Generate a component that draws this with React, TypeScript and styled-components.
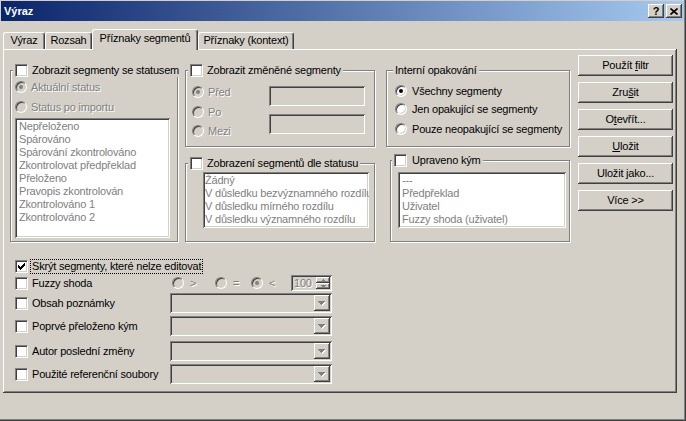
import React from "react";
import styled, { createGlobalStyle, css } from "styled-components";

const FACE = "#D4D0C8";
const SHADOW = "#808080";
const DARK = "#404040";
const LIGHT = "#FFFFFF";

const GlobalStyle = createGlobalStyle`
	html, body {
		margin: 0;
		padding: 0;
		background: ${FACE};
	}
	body {
		font-family: "Liberation Sans", Arial, sans-serif;
		font-size: 11px;
		letter-spacing: -0.2px;
		color: #000;
	}
	* {
		box-sizing: border-box;
	}
`;

const raised = css`
	box-shadow: inset -1px -1px ${DARK}, inset 1px 1px ${LIGHT}, inset -2px -2px ${SHADOW},
		inset 2px 2px ${FACE};
`;

const sunken = css`
	box-shadow: inset 1px 1px ${SHADOW}, inset -1px -1px ${LIGHT}, inset 2px 2px ${DARK},
		inset -2px -2px ${FACE};
`;

const Window = styled("div")`
	width: 686px;
	height: 421px;
	background: ${FACE};
	padding: 1px 2px 2px 1px;
	box-shadow: inset -1px -1px ${DARK}, inset -2px -2px ${SHADOW};
	display: flex;
	flex-direction: column;
`;

const TitleBar = styled("div")`
	height: 20px;
	display: flex;
	align-items: center;
	padding: 0 2px 0 3px;
	background: linear-gradient(to right, #0a246a, #a6caf0);
`;

const TitleText = styled("span")`
	flex: 1;
	color: #fff;
	font-weight: bold;
	letter-spacing: 0;
`;

const TitleButton = styled("span")`
	${raised};
	width: 16px;
	height: 14px;
	margin-left: 2px;
	background: ${FACE};
	display: flex;
	align-items: center;
	justify-content: center;
	font-weight: bold;
	font-size: 11px;
	line-height: 14px;
	letter-spacing: 0;
`;

const TabStrip = styled("div")`
	height: 28px;
	display: flex;
	align-items: flex-end;
	padding-left: 2px;
`;

const Tab = styled("div")<{ $w: number; $active?: boolean }>`
	position: relative;
	z-index: 1;
	width: ${({ $w }) => $w}px;
	height: ${({ $active }) => ($active ? 21 : 17)}px;
	margin-bottom: ${({ $active }) => ($active ? -1 : 0)}px;
	padding-top: ${({ $active }) => ($active ? 2 : 1)}px;
	background: ${FACE};
	border-top: 1px solid ${LIGHT};
	border-left: 1px solid ${LIGHT};
	border-right: 1px solid ${DARK};
	border-radius: 3px 3px 0 0;
	box-shadow: inset -1px 0 ${SHADOW};
	display: flex;
	justify-content: center;
	line-height: 13px;
	white-space: nowrap;
`;

const Panel = styled("div")`
	${raised};
	margin-left: 2px;
	width: 674px;
	height: 344px;
	padding: 0 4px 0 7px;
	display: flex;
	align-items: flex-start;
`;

const Main = styled("div")`
	width: 560px;
	padding-top: 21px;
	display: flex;
	flex-direction: column;
`;

const TopGrid = styled("div")`
	height: 172px;
	display: flex;
`;

const Column = styled("div")<{ $w: number; $ml?: number }>`
	width: ${({ $w }) => $w}px;
	margin-left: ${({ $ml }) => $ml ?? 0}px;
	display: flex;
	flex-direction: column;
`;

const Group = styled("div")<{ $h?: number; $mt?: number; $ml?: number }>`
	position: relative;
	border: 1px solid ${SHADOW};
	box-shadow: inset 1px 1px ${LIGHT}, 1px 1px 0 ${LIGHT};
	margin-top: ${({ $mt }) => $mt ?? 0}px;
	margin-left: ${({ $ml }) => $ml ?? 0}px;
	${({ $h }) => ($h ? `height: ${$h}px;` : "flex: 1;")}
`;

const Legend = styled("div")<{ $left: number }>`
	position: absolute;
	top: -7px;
	left: ${({ $left }) => $left}px;
	height: 13px;
	padding: 0 2px;
	background: ${FACE};
	display: flex;
	align-items: center;
	line-height: 13px;
	white-space: nowrap;
`;

const GroupBody = styled("div")<{ $pad: string }>`
	padding: ${({ $pad }) => $pad};
	display: flex;
	flex-direction: column;
`;

const SplitBody = styled("div")`
	padding: 11px 9px 0 6px;
	display: flex;
	justify-content: space-between;
`;

const Stack = styled("div")<{ $pt?: number; $gap?: number }>`
	padding-top: ${({ $pt }) => $pt ?? 0}px;
	display: flex;
	flex-direction: column;
	gap: ${({ $gap }) => $gap ?? 0}px;
`;

const OptionRow = styled("div")<{ $h: number }>`
	height: ${({ $h }) => $h}px;
	display: flex;
	align-items: center;
	white-space: nowrap;
`;

const Text = styled("span")<{ $disabled?: boolean; $ml?: number }>`
	margin-left: ${({ $ml }) => $ml ?? 0}px;
	line-height: 13px;
	white-space: nowrap;
	color: ${({ $disabled }) => ($disabled ? SHADOW : "#000")};
	text-shadow: ${({ $disabled }) => ($disabled ? `1px 1px 0 ${LIGHT}` : "none")};
`;

const FocusText = styled("span")`
	margin-left: 2px;
	padding: 0 1px;
	border: 1px dotted #000;
	line-height: 13px;
	white-space: nowrap;
`;

const Box = styled("span")<{ $disabled?: boolean }>`
	flex: none;
	width: 13px;
	height: 13px;
	background: ${({ $disabled }) => ($disabled ? FACE : LIGHT)};
	border-top: 1px solid ${SHADOW};
	border-left: 1px solid ${SHADOW};
	border-bottom: 1px solid ${LIGHT};
	border-right: 1px solid ${LIGHT};
	box-shadow: inset 1px 1px ${DARK}, inset -1px -1px ${FACE};
	display: flex;
	align-items: center;
	justify-content: center;
`;

const Round = styled("span")<{ $disabled?: boolean }>`
	flex: none;
	width: 12px;
	height: 12px;
	border-radius: 50%;
	background: ${({ $disabled }) => ($disabled ? FACE : LIGHT)};
	border-top: 1px solid ${SHADOW};
	border-left: 1px solid ${SHADOW};
	border-bottom: 1px solid ${LIGHT};
	border-right: 1px solid ${LIGHT};
	box-shadow: inset 1px 1px ${DARK}, inset -1px -1px ${FACE};
	display: flex;
	align-items: center;
	justify-content: center;
`;

const Dot = styled("span")<{ $disabled?: boolean }>`
	width: 4px;
	height: 4px;
	border-radius: 50%;
	background: ${({ $disabled }) => ($disabled ? SHADOW : "#000")};
`;

const ListBox = styled("div")<{ $h: number; $pad: number }>`
	${sunken};
	height: ${({ $h }) => $h}px;
	padding: 2px ${({ $pad }) => 2 + $pad}px;
	background: ${LIGHT};
	overflow: hidden;
`;

const ListItem = styled("div")`
	line-height: 13px;
	white-space: nowrap;
	color: ${SHADOW};
`;

const EditBox = styled("div")`
	${sunken};
	width: 96px;
	height: 20px;
	background: ${FACE};
`;

const BottomRows = styled("div")`
	margin-top: 16px;
	padding-left: 5px;
	display: flex;
	flex-direction: column;
`;

const FieldRow = styled("div")<{ $h: number }>`
	height: ${({ $h }) => $h}px;
	display: grid;
	grid-template-columns: 155px 162px;
	align-items: center;
`;

const FieldLabel = styled("div")`
	display: flex;
	align-items: center;
`;

const Combo = styled("div")`
	${sunken};
	height: 20px;
	padding: 2px;
	background: ${FACE};
	display: flex;
	justify-content: flex-end;
`;

const DropButton = styled("span")`
	${raised};
	width: 16px;
	height: 16px;
	background: ${FACE};
	display: flex;
	align-items: center;
	justify-content: center;
`;

const FuzzyControls = styled("div")`
	padding-left: 2px;
	display: flex;
	align-items: center;
`;

const FuzzyOption = styled("div")<{ $w: number }>`
	width: ${({ $w }) => $w}px;
	display: flex;
	align-items: center;
`;

const SpinBox = styled("div")`
	${sunken};
	width: 41px;
	height: 16px;
	padding: 2px;
	background: ${FACE};
	display: flex;
	align-items: stretch;
`;

const SpinValue = styled("span")`
	flex: 1;
	padding-left: 1px;
	line-height: 12px;
	color: ${SHADOW};
	text-shadow: 1px 1px 0 ${LIGHT};
`;

const SpinButtons = styled("span")`
	width: 14px;
	display: flex;
	flex-direction: column;
`;

const SpinButton = styled("span")`
	${raised};
	flex: 1;
	background: ${FACE};
	display: flex;
	align-items: center;
	justify-content: center;
`;

const ButtonColumn = styled("div")`
	width: 95px;
	margin-left: auto;
	padding-top: 6px;
	display: flex;
	flex-direction: column;
	gap: 6px;
`;

const Button = styled("div")`
	${raised};
	height: 21px;
	background: ${FACE};
	display: flex;
	align-items: center;
	justify-content: center;
	line-height: 13px;
	white-space: nowrap;
`;

const CheckMark = () => (
	<svg width="7" height="7" viewBox="0 0 7 7" shapeRendering="crispEdges">
		<polygon points="0,2 2,4 7,-1 7,2 2,7 0,5" fill="#000" />
	</svg>
);

const Arrow = () => (
	<svg width="8" height="5" viewBox="0 0 8 5" shapeRendering="crispEdges">
		<polygon points="1,1 8,1 4.5,5" fill={LIGHT} />
		<polygon points="0,0 7,0 3.5,4" fill={SHADOW} />
	</svg>
);

const SpinArrow = ({ up }: { up?: boolean }) => (
	<svg width="5" height="3" viewBox="0 0 5 3" shapeRendering="crispEdges">
		<polygon points={up ? "2.5,0 5,3 0,3" : "0,0 5,0 2.5,3"} fill={SHADOW} />
	</svg>
);

const CloseGlyph = () => (
	<svg width="8" height="7" viewBox="0 0 8 7">
		<path d="M0.5 0.5 L7.5 6.5 M7.5 0.5 L0.5 6.5" stroke="#000" strokeWidth="1.6" />
	</svg>
);

interface ICheckProps {
	checked?: boolean;
	disabled?: boolean;
}

const Checkbox = ({ checked, disabled }: ICheckProps) => (
	<Box $disabled={disabled}>{checked && <CheckMark />}</Box>
);

const Radio = ({ checked, disabled }: ICheckProps) => (
	<Round $disabled={disabled}>{checked && <Dot $disabled={disabled} />}</Round>
);

const statusItems = [
	"Nepřeloženo",
	"Spárováno",
	"Spárování zkontrolováno",
	"Zkontrolovat předpřeklad",
	"Přeloženo",
	"Pravopis zkontrolován",
	"Zkontrolováno 1",
	"Zkontrolováno 2",
];

const diffItems = [
	"Žádný",
	"V důsledku bezvýznamného rozdílu",
	"V důsledku mírného rozdílu",
	"V důsledku významného rozdílu",
];

const editorItems = ["---", "Předpřeklad", "Uživatel", "Fuzzy shoda (uživatel)"];

const comboRows = [
	{ label: "Obsah poznámky", h: 22 },
	{ label: "Poprvé přeloženo kým", h: 24 },
	{ label: "Autor poslední změny", h: 26 },
	{ label: "Použité referenční soubory", h: 20 },
];

export default function App() {
	return (
		<>
			<GlobalStyle />
			<Window>
				<TitleBar>
					<TitleText>Výraz</TitleText>
					<TitleButton>?</TitleButton>
					<TitleButton>
						<CloseGlyph />
					</TitleButton>
				</TitleBar>

				<TabStrip>
					<Tab $w={42}>Výraz</Tab>
					<Tab $w={47}>Rozsah</Tab>
					<Tab $w={106} $active>
						Příznaky segmentů
					</Tab>
					<Tab $w={96}>Příznaky (kontext)</Tab>
				</TabStrip>

				<Panel>
					<Main>
						<TopGrid>
							<Column $w={168}>
								<Group>
									<Legend $left={2}>
										<Checkbox />
										<Text $ml={4}>Zobrazit segmenty se statusem</Text>
									</Legend>
									<GroupBody $pad="6px 7px 0 4px">
										<OptionRow $h={20}>
											<Radio checked disabled />
											<Text $disabled $ml={4}>
												Aktuální status
											</Text>
										</OptionRow>
										<OptionRow $h={20}>
											<Radio disabled />
											<Text $disabled $ml={4}>
												Status po importu
											</Text>
										</OptionRow>
										<ListBox $h={120} $pad={2} style={{ marginTop: 1 }}>
											{statusItems.map((item) => (
												<ListItem key={item}>{item}</ListItem>
											))}
										</ListBox>
									</GroupBody>
								</Group>
							</Column>

							<Column $w={190} $ml={7}>
								<Group $h={77}>
									<Legend $left={2}>
										<Checkbox />
										<Text $ml={4}>Zobrazit změněné segmenty</Text>
									</Legend>
									<SplitBody>
										<Stack>
											<OptionRow $h={20}>
												<Radio checked disabled />
												<Text $disabled $ml={4}>
													Před
												</Text>
											</OptionRow>
											<OptionRow $h={20}>
												<Radio disabled />
												<Text $disabled $ml={4}>
													Po
												</Text>
											</OptionRow>
											<OptionRow $h={18}>
												<Radio disabled />
												<Text $disabled $ml={4}>
													Mezi
												</Text>
											</OptionRow>
										</Stack>
										<Stack $pt={4} $gap={8}>
											<EditBox />
											<EditBox />
										</Stack>
									</SplitBody>
								</Group>
								<Group $mt={16}>
									<Legend $left={2}>
										<Checkbox />
										<Text $ml={4}>Zobrazení segmentů dle statusu</Text>
									</Legend>
									<GroupBody $pad="8px 5px 0 17px">
										<ListBox $h={56} $pad={0}>
											{diffItems.map((item) => (
												<ListItem key={item}>{item}</ListItem>
											))}
										</ListBox>
									</GroupBody>
								</Group>
							</Column>

							<Column $w={184} $ml={11}>
								<Group $h={77}>
									<Legend $left={6}>
										<Text>Interní opakování</Text>
									</Legend>
									<GroupBody $pad="11px 4px 0 8px">
										<OptionRow $h={18}>
											<Radio checked />
											<Text $ml={5}>Všechny segmenty</Text>
										</OptionRow>
										<OptionRow $h={18}>
											<Radio />
											<Text $ml={5}>Jen opakující se segmenty</Text>
										</OptionRow>
										<OptionRow $h={22}>
											<Radio />
											<Text $ml={5}>Pouze neopakující se segmenty</Text>
										</OptionRow>
									</GroupBody>
								</Group>
								<Group $mt={13} $ml={4}>
									<Legend $left={1}>
										<Checkbox />
										<Text $ml={5}>Upraveno kým</Text>
									</Legend>
									<GroupBody $pad="11px 3px 0 7px">
										<ListBox $h={56} $pad={2}>
											{editorItems.map((item) => (
												<ListItem key={item}>{item}</ListItem>
											))}
										</ListBox>
									</GroupBody>
								</Group>
							</Column>
						</TopGrid>

						<BottomRows>
							<FieldRow $h={16}>
								<FieldLabel>
									<Checkbox checked />
									<FocusText>Skrýt segmenty, které nelze editovat</FocusText>
								</FieldLabel>
							</FieldRow>
							<FieldRow $h={18}>
								<FieldLabel>
									<Checkbox />
									<Text $ml={4}>Fuzzy shoda</Text>
								</FieldLabel>
								<FuzzyControls>
									<FuzzyOption $w={43}>
										<Radio disabled />
										<Text $disabled $ml={6}>
											&gt;
										</Text>
									</FuzzyOption>
									<FuzzyOption $w={36}>
										<Radio disabled />
										<Text $disabled $ml={6}>
											=
										</Text>
									</FuzzyOption>
									<FuzzyOption $w={40}>
										<Radio checked disabled />
										<Text $disabled $ml={6}>
											&lt;
										</Text>
									</FuzzyOption>
									<SpinBox>
										<SpinValue>100</SpinValue>
										<SpinButtons>
											<SpinButton>
												<SpinArrow up />
											</SpinButton>
											<SpinButton>
												<SpinArrow />
											</SpinButton>
										</SpinButtons>
									</SpinBox>
								</FuzzyControls>
							</FieldRow>
							{comboRows.map((row) => (
								<FieldRow key={row.label} $h={row.h}>
									<FieldLabel>
										<Checkbox />
										<Text $ml={4}>{row.label}</Text>
									</FieldLabel>
									<Combo>
										<DropButton>
											<Arrow />
										</DropButton>
									</Combo>
								</FieldRow>
							))}
						</BottomRows>
					</Main>

					<ButtonColumn>
						<Button>
							<span>
								Použít <u>f</u>iltr
							</span>
						</Button>
						<Button>
							<span>
								Zru<u>š</u>it
							</span>
						</Button>
						<Button>
							<span>
								O<u>t</u>evřít...
							</span>
						</Button>
						<Button>
							<span>
								<u>U</u>ložit
							</span>
						</Button>
						<Button>
							<span>Uložit jako...</span>
						</Button>
						<Button>
							<span>Více &gt;&gt;</span>
						</Button>
					</ButtonColumn>
				</Panel>
			</Window>
		</>
	);
}
